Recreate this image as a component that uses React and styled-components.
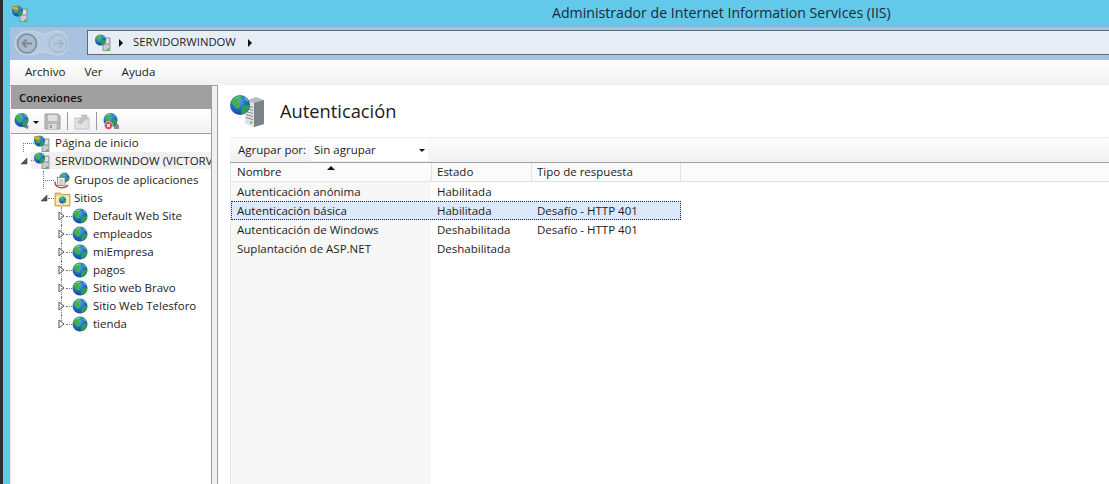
import React from "react";
import styled, { createGlobalStyle } from "styled-components";

const GlobalStyle = createGlobalStyle`
  html, body { margin: 0; padding: 0; height: 100%; overflow: hidden; }
  body { font-family: "Open Sans", "Liberation Sans", sans-serif; font-size: 11.5px; line-height: 14px; color: #1c1c1c; }
  #root { height: 100%; }
`;

const sites = ["Default Web Site", "empleados", "miEmpresa", "pagos", "Sitio web Bravo", "Sitio Web Telesforo", "tienda"];

const rows = [
  { name: "Autenticación anónima", state: "Habilitada", type: "" },
  { name: "Autenticación básica", state: "Habilitada", type: "Desafío - HTTP 401", selected: true },
  { name: "Autenticación de Windows", state: "Deshabilitada", type: "Desafío - HTTP 401" },
  { name: "Suplantación de ASP.NET", state: "Deshabilitada", type: "" },
];

const Screen = styled.div`
  width: 1109px;
  height: 484px;
  overflow: hidden;
  display: flex;
  background: #63c9ea;
`;
const DesktopEdge = styled.div`
  width: 3px;
  background: #2b2d30;
`;
const Window = styled.div`
  flex: 1;
  display: flex;
  flex-direction: column;
  min-width: 0;
`;
const TitleBar = styled.div`
  height: 26px;
  display: flex;
  align-items: center;
  padding-left: 9px;
  font-size: 14.15px;
  color: #1a2a33;
`;
const TitleText = styled.span`
  margin-left: 524px;
  margin-top: -1px;
`;
const Client = styled.div`
  flex: 1;
  margin-left: 7px;
  display: flex;
  flex-direction: column;
  min-height: 0;
  border-top: 1px solid #8fb0c9;
`;
const AddressArea = styled.div`
  height: 33px;
  background: #a7c1de;
  display: flex;
  align-items: flex-start;
  padding: 3px 0 0 4px;
  box-sizing: border-box;
`;
const AddressField = styled.div`
  flex: 1;
  height: 25px;
  box-sizing: border-box;
  margin-left: 17px;
  background: #e6edf5;
  border-top: 1px solid #5f6a78;
  border-bottom: 1px solid #5f6a78;
  border-left: 1px solid #5f6a78;
  display: flex;
  align-items: center;
  padding-left: 7px;
  gap: 8px;
`;
const Crumb = styled.span`
  margin: -1px 4px 0 2px;
  font-size: 11.3px;
`;
const Chevron = styled.span`
  width: 0;
  height: 0;
  border-left: 4px solid #111;
  border-top: 4px solid transparent;
  border-bottom: 4px solid transparent;
`;
const MenuBar = styled.div`
  height: 25px;
  background: linear-gradient(#ffffff, #f0f0f0);
  border-bottom: 1px solid #a0a0a0;
  display: flex;
  align-items: center;
  padding-left: 15px;
  gap: 19px;
`;
const MenuItem = styled.span`
  font-size: 11.6px;
  margin-top: -2px;
`;
const Body = styled.div`
  flex: 1;
  display: flex;
  min-height: 0;
  background: #f0f0f0;
`;
const Sidebar = styled.aside`
  width: 200px;
  margin-left: 1px;
  display: flex;
  flex-direction: column;
  background: #fff;
  border-right: 1px solid #a0a0a0;
`;
const SidebarHeader = styled.div`
  height: 24px;
  box-sizing: border-box;
  margin-top: -1px;
  padding: 2px 0 0 8px;
  background: #a0a0a0;
  display: flex;
  align-items: center;
  font-weight: 600;
  font-size: 11.3px;
  color: #111;
`;
const SidebarTools = styled.div`
  height: 24px;
  display: flex;
  align-items: center;
  padding-left: 3px;
  background: linear-gradient(#ffffff, #f0f0f0);
  border-bottom: 1px solid #a0a0a0;
`;
const ToolSeparator = styled.span`
  width: 1px;
  height: 18px;
  margin: 0 6px 0 6px;
  background: #9a9a9a;
`;
const ToolCaret = styled.span`
  width: 0;
  height: 0;
  margin: 2px 5px 0 2px;
  border-top: 3px solid #111;
  border-left: 3px solid transparent;
  border-right: 3px solid transparent;
`;
const Tree = styled.div`
  flex: 1;
  overflow: hidden;
`;
const TreeRow = styled.div`
  position: relative;
  height: ${(p) => p.$height || 18}px;
  display: flex;
  align-items: ${(p) => (p.$height ? "flex-start" : "center")};
  padding-left: ${(p) => p.$indent}px;
  white-space: nowrap;
  overflow: hidden;
  &::before {
    content: "";
    display: ${(p) => (p.$trunk ? "block" : "none")};
    position: absolute;
    left: ${(p) => p.$trunk}px;
    top: ${(p) => p.$trunkTop || 0}px;
    bottom: ${(p) => p.$trunkBottom || 0}px;
    border-left: 1px dotted #777;
  }
`;
const Highlight = styled.div`
  display: flex;
  align-items: center;
  flex: 1;
  height: 17px;
  margin: 0 0 0 3px;
  background: #f0f0f0;
  overflow: hidden;
`;
const Expander = styled.span`
  width: 9px;
  height: 9px;
  flex: none;
  display: flex;
  align-items: center;
  justify-content: center;
  margin-top: ${(p) => p.$top || 0}px;
`;
const Connector = styled.span`
  width: ${(p) => p.$w}px;
  flex: none;
  border-top: 1px dotted #777;
`;
const TreeLabel = styled.span`
  margin-left: ${(p) => p.$gap ?? 5}px;
`;
const Main = styled.main`
  flex: 1;
  margin-left: 5px;
  margin-top: -1px;
  display: flex;
  flex-direction: column;
  background: #fff;
  border-left: 1px solid #a0a0a0;
  padding-left: 12px;
  min-width: 0;
`;
const PageHead = styled.div`
  height: 52px;
  display: flex;
  align-items: center;
  gap: 15px;
`;
const PageTitle = styled.h1`
  margin: 0 0 1px;
  font-size: 18.3px;
  line-height: 24px;
  font-weight: 400;
  color: #1a1a1a;
`;
const FilterBar = styled.div`
  height: 24px;
  display: flex;
  align-items: center;
  background: linear-gradient(#fdfdfd, #f0f0f0);
  border-top: 1px solid #ececec;
  border-bottom: 1px solid #a0a0a0;
  padding-left: 8px;
`;
const GroupSelect = styled.div`
  width: 117px;
  height: 22px;
  margin-left: 5px;
  box-sizing: border-box;
  background: #fff;
  display: flex;
  align-items: center;
  justify-content: space-between;
  padding: 0 3px 0 3px;
`;
const Caret = styled.span`
  width: 0;
  height: 0;
  border-top: 3px solid #111;
  border-left: 3px solid transparent;
  border-right: 3px solid transparent;
`;
const Table = styled.div`
  flex: 1;
  display: flex;
  flex-direction: column;
  border-left: 1px solid #e6e6e6;
  min-height: 0;
`;
const HeaderRow = styled.div`
  position: relative;
  height: 18px;
  display: grid;
  grid-template-columns: 201px 100px 149px 1fr;
  background: #fbfbfb;
  border-bottom: 1px solid #e2e2e2;
`;
const HeaderCell = styled.div`
  display: flex;
  align-items: center;
  padding-left: 5px;
  border-right: ${(p) => (p.$last ? "none" : "1px solid #e2e2e2")};
  &:first-child {
    padding-left: 6px;
  }
`;
const SortArrow = styled.span`
  position: absolute;
  left: 96px;
  top: 3px;
  width: 0;
  height: 0;
  border-bottom: 4px solid #111;
  border-left: 4px solid transparent;
  border-right: 4px solid transparent;
`;
const TableBody = styled.div`
  flex: 1;
  background: linear-gradient(to right, #f7f7f7 200px, #fff 200px);
`;
const DataRow = styled.div`
  height: 19px;
  width: 450px;
  box-sizing: border-box;
  display: grid;
  grid-template-columns: 201px 100px 149px;
  align-items: center;
  background: ${(p) => (p.$selected ? "#dbe9fb" : "transparent")};
  outline: ${(p) => (p.$selected ? "1px dotted #1a2a44" : "none")};
  outline-offset: -1px;
`;
const Cell = styled.div`
  padding-left: 5px;
  white-space: nowrap;
  &:first-child {
    padding-left: 6px;
  }
`;

const GlobeArt = ({ cx = 8, cy = 8, r = 7.5 }) => (
  <g transform={`translate(${cx - r} ${cy - r}) scale(${r / 7.5})`}>
    <defs>
      <radialGradient id="globeSea" cx=".4" cy=".3" r=".8">
        <stop offset="0" stopColor="#5db4ee" />
        <stop offset=".55" stopColor="#1c66c4" />
        <stop offset="1" stopColor="#123f8c" />
      </radialGradient>
    </defs>
    <circle cx="7.5" cy="7.5" r="7.5" fill="url(#globeSea)" />
    <path d="M1 4.500C2.500 1.500 6 .3 8.500 .8 9.500 2 8 3 6.500 3.500 5 4.500 7.500 6 8 7.500 8 10 6 10.500 4.500 9.500 3 8.500 1.500 6.500 1 4.500Z" fill="#45b04a" />
    <path d="M9.500 8.500C11 7.500 13.500 6.500 14.800 7.500 14.500 10.500 12.500 13.500 9 14.700 8 13 8.500 10.500 9.500 8.500Z" fill="#2f9e50" />
    <path d="M10.500 1.500C12 2 13.500 3.500 14 5 12.500 5 11 3.500 10.500 1.500Z" fill="#7dc96a" />
    <path d="M3 3.300C4.500 1.800 6.500 1.200 8 1.400 6 2 4.500 2.800 3 3.300Z" fill="#bfe6f7" opacity=".8" />
  </g>
);

const Globe = () => (
  <svg width="16" height="16" viewBox="0 0 16 16" style={{ flex: "none" }}>
    <GlobeArt />
  </svg>
);

const TowerArt = ({ x = 7, y = 4, w = 7, h = 12 }) => (
  <g>
    <rect x={x} y={y} width={w} height={h} fill="#c9ccd0" stroke="#74797d" strokeWidth=".7" />
    <rect x={x + 1} y={y + 1.500} width={w - 2} height="1" fill="#f4f4f4" />
    <rect x={x + 1} y={y + 3.500} width={w - 2} height="1" fill="#f4f4f4" />
    <rect x={x + 1} y={y + 5.500} width={w - 2} height="1" fill="#8c9094" />
    <rect x={x + w - 3} y={y + h - 2} width="2.500" height="2" fill="#4cc13c" />
  </g>
);

const ServerGlobe = ({ home }) => (
  <svg width="16" height="17" viewBox="0 0 16 17" style={{ flex: "none" }}>
    <TowerArt x={8} y={4} w={7} h={12.500} />
    <GlobeArt cx={5.500} cy={6} r={5.500} />
    {home && <path d="M.5 1.500h4l2 2-2 2-1-1h-3Z" fill="#f2ad2c" stroke="#a56a10" strokeWidth=".5" />}
  </svg>
);

const BigServer = () => (
  <svg width="35" height="34" viewBox="0 0 35 34" style={{ flex: "none" }}>
    <path d="M15 7 26 3 34 6V30L24 33 15 29Z" fill="#b8bcc0" />
    <path d="M24 9 34 6V30L24 33Z" fill="#7d8286" />
    <path d="M15 7 24 9V33L15 29Z" fill="#e0e2e4" />
    <path d="M16 11.500l7 2M16 14.500l7 2M16 17.500l7 2M16 20.500l7 2M16 23.500l7 2" stroke="#85898d" strokeWidth="1" />
    <rect x="20" y="27.500" width="2.500" height="2" fill="#5ac04a" />
    <GlobeArt cx={10} cy={11} r={10} />
  </svg>
);

const NavButtons = () => (
  <svg width="56" height="28" viewBox="0 0 56 28" style={{ flex: "none", marginTop: "-1px" }}>
    <path d="M1 14C1 6 7 2 14 2 24 2 26 5 30 5 34 5 37 2 44 2 50 2 54 7 54 14 54 21 50 26 44 26 37 26 34 23 30 23 26 23 24 26 14 26 7 26 1 22 1 14Z" fill="#b7cce3" stroke="#c6d7ea" />
    <circle cx="13" cy="14.500" r="9.500" fill="#a9bacd" stroke="#7f8894" strokeWidth="1.500" />
    <path d="M18 14.500H9M12.500 10.500 8.500 14.500 12.500 18.500" fill="none" stroke="#7f8894" strokeWidth="1.800" />
    <circle cx="44" cy="14.500" r="9" fill="#b4c9e0" stroke="#9eb0c4" />
    <path d="M39.500 14.500H48M45 10.500 49 14.500 45 18.500" fill="none" stroke="#a2b2c4" strokeWidth="1.600" />
  </svg>
);

const ToolGlobe = ({ stop }) => (
  <svg width="17" height="17" viewBox="0 0 17 17" style={{ flex: "none" }}>
    {!stop && <path d="M8 10l7 3-1.500 3L9 14Z" fill="#7c8286" />}
    {stop && <path d="M11 9l5 3v4h-5Z" fill="#868c90" />}
    <GlobeArt cx={7.500} cy={7} r={7} />
    {stop && <circle cx="5.500" cy="12.500" r="4" fill="#d9353f" stroke="#fff" strokeWidth=".6" />}
    {stop && <path d="M4 11l3 3M7 11l-3 3" stroke="#fff" strokeWidth="1.200" />}
  </svg>
);

const SaveIcon = () => (
  <svg width="17" height="17" viewBox="0 0 17 17" style={{ flex: "none" }}>
    <path d="M1 1h13l2 2v13H1Z" fill="#b8b8b8" stroke="#a0a0a0" />
    <rect x="4" y="2" width="9" height="6" fill="#e0e0e0" />
    <rect x="4.500" y="11" width="8" height="5" fill="#dcdcdc" />
    <rect x="6" y="12" width="2" height="3" fill="#9c9c9c" />
  </svg>
);

const UpIcon = () => (
  <svg width="16" height="17" viewBox="0 0 16 17" style={{ flex: "none" }}>
    <rect x="1" y="5" width="14" height="11" fill="#e2e2e2" stroke="#c4c4c4" />
    <path d="M3.500 9.500 8.500 3.500 7 2H13V7.500L11.500 6 7 11Z" fill="#c2c2c2" stroke="#adadad" strokeWidth=".5" />
  </svg>
);

const PoolIcon = () => (
  <svg width="16" height="17" viewBox="0 0 16 17" style={{ flex: "none" }}>
    <GlobeArt cx={10.500} cy={5.500} r={5} />
    <rect x="3.500" y="5.500" width="7.500" height="8" fill="#f8f8f8" stroke="#77808a" strokeWidth=".8" />
    <path d="M5 8h4.500M5 10h4.500M5 12h4.500" stroke="#8a98a8" strokeWidth=".8" />
    <path d="M1 9.500C.8 13 3 15.500 7.500 15.800 10 15.800 12.500 15 14 13" fill="none" stroke="#c8382e" strokeWidth="1.300" />
  </svg>
);

const FolderGlobe = () => (
  <svg width="17" height="17" viewBox="0 0 17 17" style={{ flex: "none" }}>
    <path d="M1 3h5.500l1 1.500H16V16H1Z" fill="#e6c77f" stroke="#b59447" strokeWidth=".8" />
    <rect x="2" y="5.500" width="13" height="9.500" fill="#f8e8b4" />
    <GlobeArt cx={8.500} cy={10} r={3.500} />
  </svg>
);

const ExpandedArrow = () => (
  <svg width="8" height="8" viewBox="0 0 8 8">
    <path d="M7 1V7H1Z" fill="#555" stroke="#444" strokeWidth=".6" />
  </svg>
);

const CollapsedArrow = () => (
  <svg width="7" height="10" viewBox="0 0 7 10">
    <path d="M1 1 6 5 1 9Z" fill="#fff" stroke="#555" />
  </svg>
);

export default function App() {
  return (
    <Screen>
      <GlobalStyle />
      <DesktopEdge />
      <Window>
        <TitleBar>
          <ServerGlobe home />
          <TitleText>Administrador de Internet Information Services (IIS)</TitleText>
        </TitleBar>
        <Client>
          <AddressArea>
            <NavButtons />
            <AddressField>
              <ServerGlobe />
              <Chevron />
              <Crumb>SERVIDORWINDOW</Crumb>
              <Chevron />
            </AddressField>
          </AddressArea>
          <MenuBar>
            <MenuItem>Archivo</MenuItem>
            <MenuItem>Ver</MenuItem>
            <MenuItem>Ayuda</MenuItem>
          </MenuBar>
          <Body>
            <Sidebar>
              <SidebarHeader>Conexiones</SidebarHeader>
              <SidebarTools>
                <ToolGlobe />
                <ToolCaret />
                <SaveIcon />
                <ToolSeparator />
                <UpIcon />
                <ToolSeparator />
                <ToolGlobe stop />
              </SidebarTools>
              <Tree>
                <TreeRow $indent={12} $trunk={12} $trunkTop={9}>
                  <Connector $w={11} />
                  <ServerGlobe home />
                  <TreeLabel>Página de inicio</TreeLabel>
                </TreeRow>
                <TreeRow $indent={8} $height={19}>
                  <Expander $top={4}><ExpandedArrow /></Expander>
                  <Highlight>
                    <Connector $w={3} />
                    <ServerGlobe />
                    <TreeLabel>SERVIDORWINDOW (VICTORV</TreeLabel>
                  </Highlight>
                </TreeRow>
                <TreeRow $indent={32} $trunk={32}>
                  <Connector $w={11} />
                  <PoolIcon />
                  <TreeLabel $gap={4}>Grupos de aplicaciones</TreeLabel>
                </TreeRow>
                <TreeRow $indent={28}>
                  <Expander><ExpandedArrow /></Expander>
                  <Connector $w={6} />
                  <FolderGlobe />
                  <TreeLabel $gap={3}>Sitios</TreeLabel>
                </TreeRow>
                {sites.map((site, i) => (
                  <TreeRow key={site} $indent={46} $trunk={50} $trunkBottom={i === sites.length - 1 ? 12 : 0}>
                    <Expander><CollapsedArrow /></Expander>
                    <Connector $w={6} />
                    <Globe />
                    <TreeLabel $gap={5}>{site}</TreeLabel>
                  </TreeRow>
                ))}
              </Tree>
            </Sidebar>
            <Main>
              <PageHead>
                <BigServer />
                <PageTitle>Autenticación</PageTitle>
              </PageHead>
              <FilterBar>
                Agrupar por:
                <GroupSelect>
                  Sin agrupar
                  <Caret />
                </GroupSelect>
              </FilterBar>
              <Table>
                <HeaderRow>
                  <HeaderCell>Nombre</HeaderCell>
                  <SortArrow />
                  <HeaderCell>Estado</HeaderCell>
                  <HeaderCell>Tipo de respuesta</HeaderCell>
                  <HeaderCell $last />
                </HeaderRow>
                <TableBody>
                  {rows.map((row) => (
                    <DataRow key={row.name} $selected={row.selected}>
                      <Cell>{row.name}</Cell>
                      <Cell>{row.state}</Cell>
                      <Cell>{row.type}</Cell>
                    </DataRow>
                  ))}
                </TableBody>
              </Table>
            </Main>
          </Body>
        </Client>
      </Window>
    </Screen>
  );
}
